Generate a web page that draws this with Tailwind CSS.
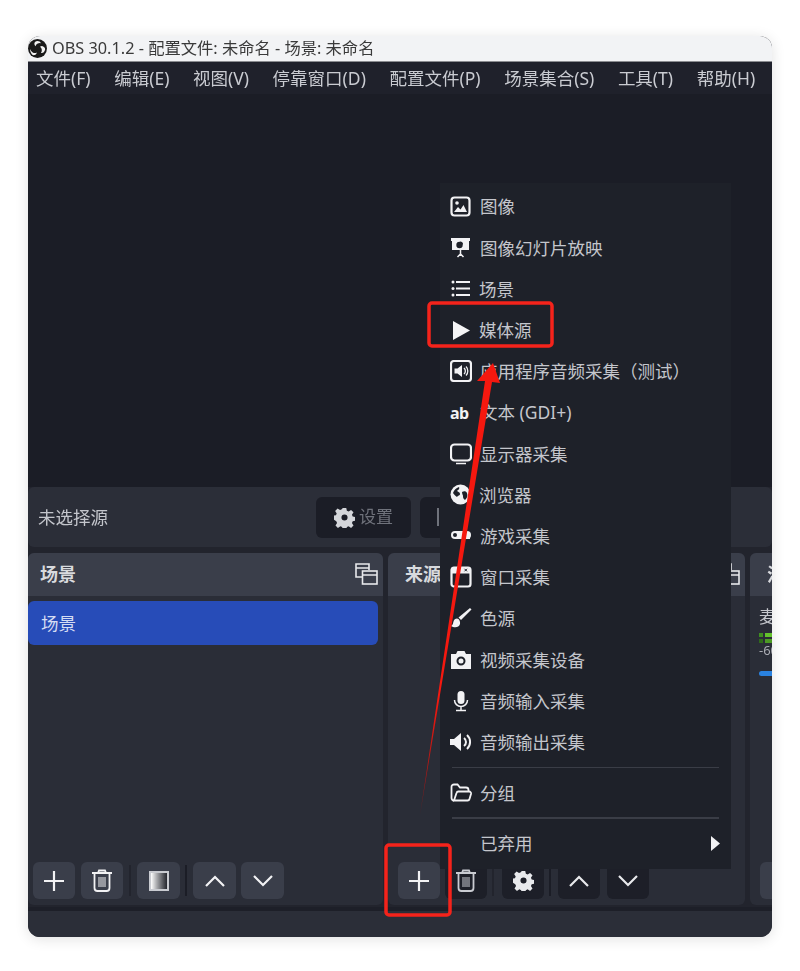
<!DOCTYPE html>
<html lang="zh-CN">

<head>
    <meta charset="UTF-8" />
    <meta name="viewport" content="width=device-width, initial-scale=1.0" />
    <title>OBS 30.1.2</title>
    <script src="https://cdn.jsdelivr.net/npm/@tailwindcss/browser@4"></script>
</head>

<body class="bg-white font-['Noto_Sans','Noto_Sans_CJK_SC',sans-serif]">

    <div class="relative w-[800px] h-[971px] pt-[36px] px-[28px] overflow-hidden blur-[0.4px]">

        <!-- window -->
        <div class="relative w-[744px] h-[901px] flex flex-col rounded-[12px] overflow-hidden shadow-[0_2px_14px_rgba(0,0,0,0.12)] bg-[#22242d]">

            <!-- titlebar -->
            <div class="h-[26px] flex-shrink-0 flex items-center bg-[#f2f3f5] border-b border-[#8a8c90] text-[16.3px] text-[#3a3a3a]">
                <svg class="w-[19px] h-[19px] ml-[0px] mr-[5px]" viewBox="0 0 24 24">
                    <circle cx="12" cy="12" r="12" fill="#1a1a1a" />
                    <path d="M12 2.500a5 5 0 0 1 4.500 3a5.500 5.500 0 0 0-7 3.500a4 4 0 0 1-1.500-3a4 4 0 0 1 4-3.500z" fill="#f2f2f2" />
                    <path d="M21 15a5 5 0 0 1-4.800 2.800a5.500 5.500 0 0 0-1-8a4 4 0 0 1 3.300-.8a4 4 0 0 1 2.500 6z" fill="#f2f2f2" />
                    <path d="M4 18a5 5 0 0 1-.8-5.500a5.500 5.500 0 0 0 8 4.500a4 4 0 0 1-1.800 2.800a4 4 0 0 1-5.400-1.800z" fill="#f2f2f2" />
                </svg>
                <span class="whitespace-nowrap">OBS 30.1.2 - 配置文件: 未命名 - 场景: 未命名</span>
            </div>

            <!-- menubar -->
            <div class="h-[32px] flex-shrink-0 flex items-center gap-[23.6px] pl-[8px] bg-[#1f212b] text-[17.5px] text-[#c9cbd1] whitespace-nowrap">
                <span>文件(F)</span>
                <span>编辑(E)</span>
                <span>视图(V)</span>
                <span>停靠窗口(D)</span>
                <span>配置文件(P)</span>
                <span>场景集合(S)</span>
                <span>工具(T)</span>
                <span>帮助(H)</span>
            </div>

            <!-- preview -->
            <div class="h-[393px] flex-shrink-0 bg-[#1b1d26]"></div>

            <!-- context bar -->
            <div class="h-[60px] flex-shrink-0 flex items-center rounded-[6px] bg-[#2b2e38] pl-[10px]">
                <span class="text-[17.5px] text-[#c4c6cc] w-[278px]">未选择源</span>
                <div class="w-[95px] h-[41px] flex items-center justify-center gap-[4px] rounded-[6px] bg-[#1b1d26] text-[17px] text-[#6f727b]">
                    <svg class="w-[21px] h-[21px]" viewBox="0 0 24 24" fill="#d4d6da">
                        <path fill-rule="evenodd" d="M10 1h4l.7 3.200 2 .9 2.800-1.800 2.800 2.800-1.800 2.800.9 2 3.200.7v4l-3.200.7-.9 2 1.800 2.800-2.800 2.800-2.800-1.800-2 .9-.7 3.200h-4l-.7-3.200-2-.9-2.800 1.800-2.800-2.800 1.800-2.800-.9-2L-1 14v-4l3.200-.7.9-2L1.300 4.500l2.800-2.800 2.800 1.800 2-.9zM12 8.500a3.500 3.500 0 1 0 0 7 3.500 3.500 0 0 0 0-7z" />
                    </svg>
                    <span>设置</span>
                </div>
                <div class="ml-[9px] w-[60px] h-[41px] rounded-[6px] bg-[#1b1d26] flex items-center pl-[17px]">
                    <span class="w-[2px] h-[18px] bg-[#6f727b]"></span>
                </div>
            </div>

            <!-- docks -->
            <div class="h-[352px] mt-[6px] flex-shrink-0 flex gap-[5px]">

                <!-- scenes -->
                <div class="w-[355px] flex-shrink-0 flex flex-col rounded-[6px] bg-[#2a2d37] overflow-hidden">
                    <div class="h-[43px] flex-shrink-0 flex items-center justify-between pl-[12px] pr-[5px] bg-[#3a3e4a]">
                        <span class="text-[18px] font-bold text-[#d8dade]">场景</span>
                        <svg class="w-[23px] h-[23px]" viewBox="0 0 23 23" fill="none" stroke="#e8e9ec" stroke-width="1.600">
                            <path d="M8 14H1V1h13v6M1 5h13" />
                            <rect x="7.500" y="8" width="14.500" height="13" />
                            <path d="M7.500 12h14.500" />
                        </svg>
                    </div>
                    <div class="flex-grow pt-[5px]">
                        <div class="h-[44px] w-[350px] flex items-center pl-[13px] rounded-[6px] bg-[#274cb8] text-[17.5px] text-[#d5dcf3]">场景</div>
                    </div>
                    <div class="h-[43px] flex-shrink-0 flex items-start pl-[5px] gap-[5px]">
                        <div class="w-[42px] h-[37px] rounded-[6px] bg-[#3a3e4a] flex items-center justify-center">
                            <svg class="w-[22px] h-[22px]" viewBox="0 0 22 22" stroke="#f2f2f4" stroke-width="2.200"><path d="M11 1v20M1 11h20" /></svg>
                        </div>
                        <div class="ml-[1px] w-[42px] h-[37px] rounded-[6px] bg-[#3a3e4a] flex items-center justify-center">
                            <svg class="w-[22px] h-[24px]" viewBox="0 0 22 24" fill="none" stroke="#f2f2f4" stroke-width="1.800">
                                <path d="M1 4h20M7 4l1-2.500h6L15 4M3.500 4v15a3 3 0 0 0 3 3h9a3 3 0 0 0 3-3V4" />
                                <path d="M8 8v10M10 8v10M12 8v10M14 8v10" stroke-width="1" />
                            </svg>
                        </div>
                        <span class="ml-[1px] w-[2px] h-[31px] mt-[3px] bg-[#22242d]"></span>
                        <div class="ml-[1px] w-[43px] h-[37px] rounded-[6px] bg-[#3a3e4a] flex items-center justify-center">
                            <div class="w-[20px] h-[20px] border-2 border-[#c9cbd1] bg-gradient-to-r from-white to-[#26282f]"></div>
                        </div>
                        <span class="w-[2px] h-[31px] mt-[3px] bg-[#1b1d26]"></span>
                        <div class="ml-[1px] w-[43px] h-[37px] rounded-[6px] bg-[#3a3e4a] flex items-center justify-center">
                            <svg class="w-[20px] h-[12px]" viewBox="0 0 20 12" fill="none" stroke="#f2f2f4" stroke-width="2.200"><path d="M1 11l9-9 9 9" /></svg>
                        </div>
                        <div class="w-[43px] h-[37px] rounded-[6px] bg-[#3a3e4a] flex items-center justify-center">
                            <svg class="w-[20px] h-[12px]" viewBox="0 0 20 12" fill="none" stroke="#f2f2f4" stroke-width="2.200"><path d="M1 1l9 9 9-9" /></svg>
                        </div>
                    </div>
                </div>

                <!-- sources -->
                <div class="w-[357px] flex-shrink-0 flex flex-col rounded-[6px] bg-[#2a2d37] overflow-hidden">
                    <div class="h-[43px] flex-shrink-0 flex items-center justify-between pl-[17px] pr-[5px] bg-[#3a3e4a]">
                        <span class="text-[18px] font-bold text-[#d8dade]">来源</span>
                        <svg class="w-[23px] h-[23px]" viewBox="0 0 23 23" fill="none" stroke="#e8e9ec" stroke-width="1.600">
                            <path d="M8 14H1V1h13v6M1 5h13" />
                            <rect x="7.500" y="8" width="14.500" height="13" />
                            <path d="M7.500 12h14.500" />
                        </svg>
                    </div>
                    <div class="flex-grow"></div>
                    <div class="h-[43px] flex-shrink-0 flex items-start pl-[10px] gap-[5px]">
                        <div class="w-[42px] h-[37px] rounded-[6px] bg-[#3a3e4a] flex items-center justify-center">
                            <svg class="w-[22px] h-[22px]" viewBox="0 0 22 22" stroke="#f2f2f4" stroke-width="2.200"><path d="M11 1v20M1 11h20" /></svg>
                        </div>
                        <div class="w-[42px] h-[37px] rounded-[6px] bg-[#1d1f28] flex items-center justify-center">
                            <svg class="w-[22px] h-[24px]" viewBox="0 0 22 24" fill="none" stroke="#c9cbd1" stroke-width="1.800">
                                <path d="M1 4h20M7 4l1-2.500h6L15 4M3.500 4v15a3 3 0 0 0 3 3h9a3 3 0 0 0 3-3V4" />
                                <path d="M8 8v10M10 8v10M12 8v10M14 8v10" stroke-width="1" />
                            </svg>
                        </div>
                        <span class="w-[2px] h-[31px] mt-[3px] bg-[#22242d]"></span>
                        <div class="ml-[3px] w-[42px] h-[37px] rounded-[6px] bg-[#1d1f28] flex items-center justify-center">
                            <svg class="w-[21px] h-[21px]" viewBox="0 0 24 24" fill="#e8e9ec">
                                <path fill-rule="evenodd" d="M10 1h4l.7 3.200 2 .9 2.800-1.800 2.800 2.800-1.800 2.800.9 2 3.200.7v4l-3.200.7-.9 2 1.800 2.800-2.800 2.800-2.800-1.800-2 .9-.7 3.200h-4l-.7-3.200-2-.9-2.800 1.800-2.800-2.800 1.800-2.800-.9-2L-1 14v-4l3.200-.7.9-2L1.300 4.500l2.800-2.800 2.800 1.800 2-.9zM12 8.500a3.500 3.500 0 1 0 0 7 3.500 3.500 0 0 0 0-7z" />
                            </svg>
                        </div>
                        <span class="w-[2px] h-[31px] mt-[3px] bg-[#1b1d26]"></span>
                        <div class="ml-[2px] w-[42px] h-[37px] rounded-[6px] bg-[#1d1f28] flex items-center justify-center">
                            <svg class="w-[20px] h-[12px]" viewBox="0 0 20 12" fill="none" stroke="#e8e9ec" stroke-width="2.200"><path d="M1 11l9-9 9 9" /></svg>
                        </div>
                        <div class="ml-[2px] w-[42px] h-[37px] rounded-[6px] bg-[#1d1f28] flex items-center justify-center">
                            <svg class="w-[20px] h-[12px]" viewBox="0 0 20 12" fill="none" stroke="#e8e9ec" stroke-width="2.200"><path d="M1 1l9 9 9-9" /></svg>
                        </div>
                    </div>
                </div>

                <!-- mixer, cut off by the window edge -->
                <div class="w-[60px] flex-shrink-0 flex flex-col rounded-[6px] bg-[#2a2d37] overflow-hidden">
                    <div class="h-[43px] flex-shrink-0 flex items-center pl-[17px] bg-[#3a3e4a]">
                        <span class="text-[18px] font-bold text-[#d8dade] whitespace-nowrap">混音器</span>
                    </div>
                    <div class="flex-grow pl-[9px] pt-[9px]">
                        <div class="text-[17px] leading-[24px] text-[#c4c6cc] whitespace-nowrap">麦克风</div>
                        <div class="mt-[4px] flex flex-col gap-[2px]">
                            <div class="flex gap-[2px]">
                                <div class="w-[4px] h-[4px] bg-[#3f8f20]"></div>
                                <div class="w-[34px] h-[4px] bg-[#63c22c]"></div>
                            </div>
                            <div class="flex gap-[2px]">
                                <div class="w-[4px] h-[4px] bg-[#2f6a1a]"></div>
                                <div class="w-[34px] h-[4px] bg-[#4c9a24]"></div>
                            </div>
                        </div>
                        <div class="text-[13px] leading-[15px] text-[#a9abb2]">-60</div>
                        <div class="mt-[13px] w-[40px] h-[5px] rounded-full bg-[#2a82e0]"></div>
                    </div>
                    <div class="h-[43px] flex-shrink-0 pl-[10px]">
                        <div class="w-[42px] h-[37px] rounded-[6px] bg-[#3a3e4a]"></div>
                    </div>
                </div>
            </div>

            <!-- statusbar -->
            <div class="flex-grow mt-[2px] border-t-[4px] border-[#1d1f28] bg-[#2b2e38]"></div>

            <!-- source type popup -->
            <div class="absolute left-[412px] top-[147px] w-[291px] h-[686px] bg-[#1e2129] pt-[3px] text-[17.5px] text-[#c4c6cc] whitespace-nowrap">
                <div class="h-[41.200px] flex items-center gap-[9px] pl-[10px]">
                    <svg class="w-[21px] h-[21px]" viewBox="0 0 21 21">
                        <rect x="1.500" y="1.500" width="18" height="18" rx="3" fill="none" stroke="#f2f2f4" stroke-width="2.200" />
                        <circle cx="7" cy="7" r="1.800" fill="#f2f2f4" />
                        <path d="M4 16l4-5 2.500 2.500L13.500 9 17 16z" fill="#f2f2f4" />
                    </svg>
                    <span>图像</span>
                </div>
                <div class="h-[41.200px] flex items-center gap-[9px] pl-[10px]">
                    <svg class="w-[21px] h-[21px]" viewBox="0 0 21 21">
                        <path d="M1 1h19v3h-1v9H2V4H1z" fill="#f2f2f4" />
                        <path d="M10.500 13v4M10.500 17l-3 3M10.500 17l3 3" stroke="#f2f2f4" stroke-width="1.500" />
                        <circle cx="9.500" cy="8" r="3.200" fill="#1e2129" />
                        <path d="M10 4.500a3 3 0 0 1 3 3h-3z" fill="#1e2129" />
                    </svg>
                    <span>图像幻灯片放映</span>
                </div>
                <div class="h-[41.200px] flex items-center gap-[8px] pl-[10px]">
                    <svg class="w-[21px] h-[21px]" viewBox="0 0 21 21" fill="#f2f2f4">
                        <circle cx="3" cy="4" r="1.500" /><rect x="6" y="3" width="14" height="2" />
                        <circle cx="3" cy="10.500" r="1.500" /><rect x="6" y="9.500" width="14" height="2" />
                        <circle cx="3" cy="17" r="1.500" /><rect x="6" y="16" width="14" height="2" />
                    </svg>
                    <span>场景</span>
                </div>
                <div class="h-[41.200px] flex items-center gap-[8px] pl-[11px]">
                    <svg class="w-[20px] h-[21px]" viewBox="0 0 20 21" fill="#f5f5f6"><path d="M2 1l17 9.500L2 20z" /></svg>
                    <span>媒体源</span>
                </div>
                <div class="h-[41.200px] flex items-center gap-[8px] pl-[10px]">
                    <svg class="w-[22px] h-[22px]" viewBox="0 0 22 22">
                        <rect x="1" y="1" width="20" height="20" rx="3" fill="none" stroke="#f2f2f4" stroke-width="2.200" />
                        <path d="M4.500 8.500h3L12 5v12l-4.500-3.500h-3z" fill="#f2f2f4" />
                        <path d="M14 8a4 4 0 0 1 0 6M16 6.500a6.500 6.500 0 0 1 0 9" fill="none" stroke="#f2f2f4" stroke-width="1.300" />
                    </svg>
                    <span>应用程序音频采集（测试）</span>
                </div>
                <div class="h-[41.200px] flex items-center gap-[8px] pl-[10px]">
                    <span class="w-[22px] text-[16px] font-bold text-[#f2f2f4] leading-none tracking-[-0.5px]">ab</span>
                    <span>文本 (GDI+)</span>
                </div>
                <div class="h-[41.200px] flex items-center gap-[8px] pl-[10px]">
                    <svg class="w-[22px] h-[22px]" viewBox="0 0 22 22" fill="none" stroke="#f2f2f4" stroke-width="2.200">
                        <rect x="1" y="1.500" width="20" height="16" rx="3.500" />
                        <path d="M6 20.500h10" stroke-width="1.500" />
                    </svg>
                    <span>显示器采集</span>
                </div>
                <div class="h-[41.200px] flex items-center gap-[8px] pl-[10px]">
                    <svg class="w-[21px] h-[21px]" viewBox="0 0 21 21">
                        <circle cx="10.500" cy="10.500" r="10" fill="#f2f2f4" />
                        <path d="M3 9c1-3 3-5 6-6 1 2-1 3-2 4 1 1 3 1 3 3s-2 1-3 3C5 12 4 10 3 9zM12 8c2-1 4-1 5 1 1 3 0 5-2 7-2-1-2-3-2-4s-1-2-1-4z" fill="#1e2129" />
                    </svg>
                    <span>浏览器</span>
                </div>
                <div class="h-[41.200px] flex items-center gap-[8px] pl-[10px]">
                    <svg class="w-[22px] h-[22px]" viewBox="0 0 22 22">
                        <rect x="1" y="6" width="20" height="8" rx="4" fill="#f2f2f4" />
                        <path d="M14 14h6v-2l-2-4h-4z" fill="#f2f2f4" />
                        <circle cx="5" cy="10" r="2" fill="#1e2129" />
                    </svg>
                    <span>游戏采集</span>
                </div>
                <div class="h-[41.200px] flex items-center gap-[8px] pl-[10px]">
                    <svg class="w-[22px] h-[22px]" viewBox="0 0 22 22">
                        <rect x="1.500" y="1.500" width="19" height="19" rx="2.500" fill="none" stroke="#f2f2f4" stroke-width="2.200" />
                        <rect x="1.500" y="1.500" width="19" height="6" fill="#f2f2f4" />
                        <path d="M14.500 2.800l2.500 2.500M17 2.800l-2.500 2.500" stroke="#1e2129" stroke-width="1" />
                    </svg>
                    <span>窗口采集</span>
                </div>
                <div class="h-[41.200px] flex items-center gap-[8px] pl-[10px]">
                    <svg class="w-[22px] h-[22px]" viewBox="0 0 22 22" fill="#f2f2f4">
                        <path d="M20 1l1.500 1.500L11 13l-2.500-2.500z" />
                        <path d="M7 11.500c-3 0-3.500 3-4 5-.3 1.200-1 2-2 2.500 3 2 8 2 9-2 .5-2.500-1-5.500-3-5.500z" />
                    </svg>
                    <span>色源</span>
                </div>
                <div class="h-[41.200px] flex items-center gap-[8px] pl-[10px]">
                    <svg class="w-[22px] h-[22px]" viewBox="0 0 22 22">
                        <path d="M1 5h5l1.500-3h7L16 5h5v15H1z" fill="#f2f2f4" />
                        <circle cx="11" cy="12" r="3.500" fill="none" stroke="#1e2129" stroke-width="2" />
                    </svg>
                    <span>视频采集设备</span>
                </div>
                <div class="h-[41.200px] flex items-center gap-[8px] pl-[10px]">
                    <svg class="w-[22px] h-[22px]" viewBox="0 0 22 22">
                        <rect x="7.500" y="1" width="7" height="13" rx="3.500" fill="#f2f2f4" />
                        <path d="M4.500 10a6.500 6.500 0 0 0 13 0M11 16.500V20M6 20.500h10" fill="none" stroke="#f2f2f4" stroke-width="1.500" />
                    </svg>
                    <span>音频输入采集</span>
                </div>
                <div class="h-[41.200px] flex items-center gap-[8px] pl-[9px]">
                    <svg class="w-[23px] h-[22px]" viewBox="0 0 23 22">
                        <path d="M1 8h4l7-6v18l-7-6H1z" fill="#f2f2f4" />
                        <path d="M15 7a5 5 0 0 1 0 8M18 4a9.500 9.500 0 0 1 0 14" fill="none" stroke="#f2f2f4" stroke-width="2" />
                    </svg>
                    <span>音频输出采集</span>
                </div>
                <div class="h-[1.500px] mx-[12px] mt-[4px] bg-[#3a3d46]"></div>
                <div class="h-[41.200px] mt-[4px] flex items-center gap-[8px] pl-[10px]">
                    <svg class="w-[22px] h-[22px]" viewBox="0 0 22 22" fill="none" stroke="#f2f2f4" stroke-width="1.800">
                        <path d="M4 18.500a2.500 2.500 0 0 1-2.500-2.500V5A2.500 2.500 0 0 1 4 2.500h3.500l2.500 3h6a2.500 2.500 0 0 1 2.500 2.500v1" />
                        <path d="M4 18.500l2.500-7.500a2 2 0 0 1 2-1.500H19a2 2 0 0 1 2 2.500l-1.500 5a2 2 0 0 1-2 1.500z" />
                    </svg>
                    <span>分组</span>
                </div>
                <div class="h-[1.500px] mx-[12px] mt-[4px] bg-[#3a3d46]"></div>
                <div class="h-[41.200px] mt-[4px] flex items-center justify-between pl-[40px] pr-[11px]">
                    <span>已弃用</span>
                    <svg class="w-[9px] h-[15px]" viewBox="0 0 9 15" fill="#f2f2f4"><path d="M0 0l9 7.500L0 15z" /></svg>
                </div>
            </div>
        </div>

        <!-- red annotations -->
        <svg class="absolute left-0 top-0 w-[800px] h-[971px] pointer-events-none" viewBox="0 0 800 971">
            <defs>
                <linearGradient id="arrowFade" gradientUnits="userSpaceOnUse" x1="0" y1="700" x2="0" y2="815">
                    <stop offset="0" stop-color="#f5180f" />
                    <stop offset="1" stop-color="#7a1a1c" />
                </linearGradient>
            </defs>
            <rect x="429" y="303" width="123" height="43" rx="3" fill="none" stroke="#f5231b" stroke-width="3.500" />
            <rect x="386" y="845" width="64" height="70" rx="3" fill="none" stroke="#f5231b" stroke-width="3.500" />
            <polygon points="420,815 485,381 477,381 493,363 500,383 492,382" fill="url(#arrowFade)" />
        </svg>
    </div>

</body>

</html>
